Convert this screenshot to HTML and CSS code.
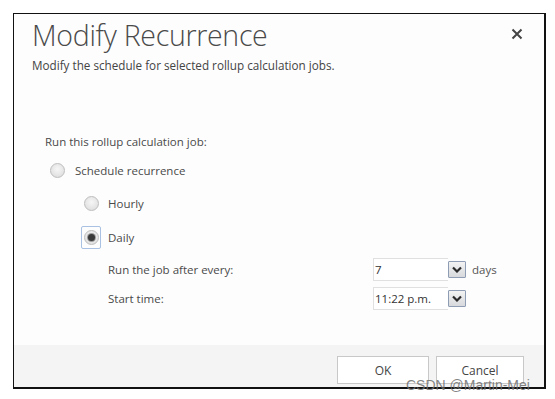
FILE: index.html
```html
<!DOCTYPE html>
<html>
<head>
<meta charset="utf-8">
<link rel="stylesheet" href="styles.css">
</head>
<body>
<div class="page">
  <div class="dialog">
    <div class="head">
      <div class="titlebar">
        <h1 class="title">Modify Recurrence</h1>
        <span class="close"><svg width="12" height="12" viewBox="0 0 12 12"><path d="M1.5 1.5L10.5 10.5M10.5 1.5L1.5 10.5" stroke="#444" stroke-width="2" fill="none"/></svg></span>
      </div>
      <p class="sub">Modify the schedule for selected rollup calculation jobs.</p>
    </div>
    <div class="body">
      <div class="intro">Run this rollup calculation job:</div>
      <div class="opt top"><span class="radio"></span><span>Schedule recurrence</span></div>
      <div class="nested">
        <div class="opt"><span class="rwrap"><span class="radio"></span></span><span>Hourly</span></div>
        <div class="opt"><span class="rwrap focus"><span class="radio on"></span></span><span>Daily</span></div>
        <div class="fields">
          <span class="flabel">Run the job after every:</span>
          <span class="ctrl"><span class="select">7</span><span class="drop"><svg width="10" height="7" viewBox="0 0 10 7"><path d="M1 1.5L5 5.5L9 1.5" stroke="#2b2b2b" stroke-width="2.2" fill="none"/></svg></span><span class="unit">days</span></span>
          <span class="flabel">Start time:</span>
          <span class="ctrl"><span class="select">11:22 p.m.</span><span class="drop"><svg width="10" height="7" viewBox="0 0 10 7"><path d="M1 1.5L5 5.5L9 1.5" stroke="#2b2b2b" stroke-width="2.2" fill="none"/></svg></span></span>
        </div>
      </div>
    </div>
    <div class="foot">
      <button class="btn">OK</button>
      <button class="btn">Cancel</button>
    </div>
  </div>
  <div class="wm">CSDN @Martin-Mei</div>
</div>
</body>
</html>
```

FILE: styles.css
```css
* { box-sizing: border-box; }
html, body { margin: 0; padding: 0; background: #fff; }
body { font-family: "Open Sans", "Noto Sans", sans-serif; color: #444; }
.page { position: relative; width: 555px; height: 399px; padding: 13px 0 0 13px; }
.dialog {
  width: 533px; height: 376px;
  border: 1px solid #111; border-right-width: 2px; border-bottom-width: 2px;
  background: #fdfdfd;
  display: flex; flex-direction: column;
}
.head { padding: 3px 21px 0 18px; }
.titlebar { display: flex; justify-content: space-between; align-items: flex-start; }
.title { margin: 0; font-weight: 300; font-size: 28.5px; line-height: 36px; color: #4a4a4a; letter-spacing: -0.3px; }
.close { margin-top: 11px; display: flex; }
.sub { margin: 4px 0 0; font-size: 11.7px; line-height: 16px; color: #444; }
.body { flex: 1; padding: 61px 0 0 31px; font-size: 11.5px; color: #4a4a4a; }
.intro { line-height: 16px; }
.opt { display: flex; align-items: center; gap: 10px; height: 22px; }
.opt.top { margin-top: 9px; margin-left: 5px; }
.nested { padding-left: 36px; padding-top: 11px; }
.nested .opt { height: 23px; margin-bottom: 11px; gap: 7px; }
.rwrap { width: 20px; height: 23px; display: flex; align-items: center; justify-content: center; border: 1px solid transparent; border-radius: 2px; }
.rwrap.focus { border-color: #a9c1e2; }
.radio {
  width: 15px; height: 15px; border-radius: 50%;
  border: 1px solid #bdbdbd;
  background: radial-gradient(circle at 50% 40%, #f6f6f6 0%, #e2e2e2 70%, #d4d4d4 100%);
  display: inline-block; position: relative;
}
.radio.on::after {
  content: ""; position: absolute; left: 3px; top: 3px; width: 7px; height: 7px; border-radius: 50%;
  background: #3a3a3a; box-shadow: 0 0 0 1px #9a9a9a;
}
.fields { display: grid; grid-template-columns: 265px auto; row-gap: 6px; margin: -2px 0 0 27px; }
.flabel { display: flex; align-items: center; height: 23px; }
.ctrl { display: flex; align-items: center; gap: 0; height: 23px; }
.select {
  width: 75px; height: 23px; border: 1px solid #e0e0e0; border-right: none; background: #fff;
  font-size: 11.5px; line-height: 21px; padding-left: 1px; color: #333;
}
.drop {
  width: 18px; height: 17px; margin-left: 0; border: 1px solid #8e9db3; border-radius: 1px;
  background: linear-gradient(#f3f3f3, #d7d9dc);
  display: flex; align-items: center; justify-content: center;
}
.unit { margin-left: 6px; font-size: 11.5px; color: #555; }
.foot {
  height: 42px; background: #f4f4f4;
  display: flex; justify-content: flex-end; align-items: flex-start; gap: 7px;
  padding: 11px 20px 0 0;
}
.btn {
  width: 92px; height: 28px; border: 1px solid #c8c8c8; background: #fff;
  font-family: "Open Sans", "Noto Sans", sans-serif; font-size: 12px; color: #444; padding: 0;
}
.btn + .btn { width: 88px; }
.wm {
  position: absolute; left: 406px; top: 377px;
  font-family: "Liberation Sans", Arial, sans-serif; font-size: 14px; color: rgba(110,110,110,0.85);
}
```
